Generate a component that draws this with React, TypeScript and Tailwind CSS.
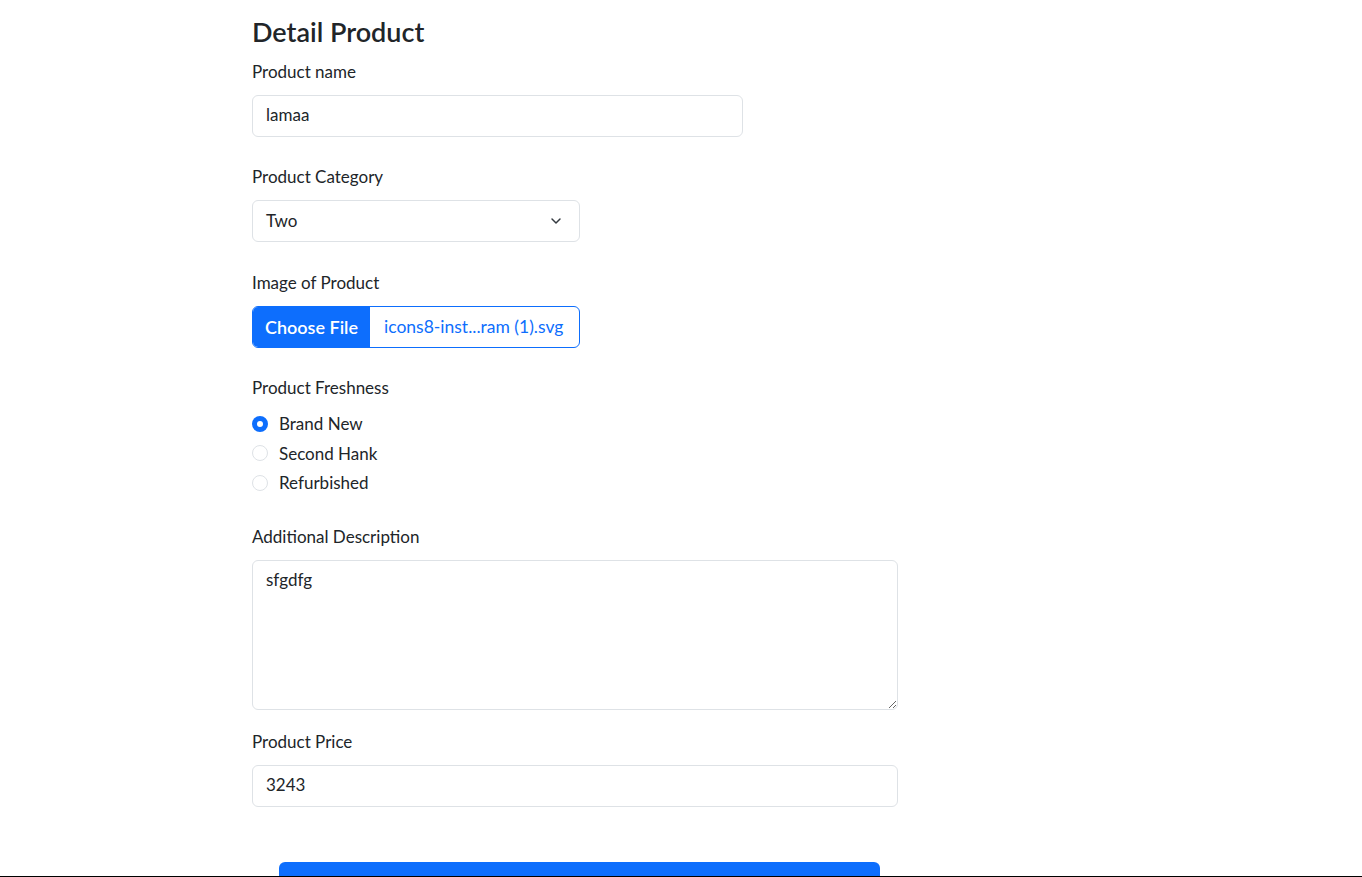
import { ChevronDown } from 'lucide-react';

const freshness = ['Brand New', 'Second Hank', 'Refurbished'];

function Label({ children }: { children: React.ReactNode }) {
  return <label className="block h-6 leading-6 mb-[11px] text-[17px]">{children}</label>;
}

export default function App() {
  return (
    <div
      className="h-[877px] overflow-hidden border-b border-black bg-white text-[#212529] text-base"
      style={{ fontFamily: 'Lato, "Noto Sans", sans-serif' }}
    >
      <form className="pl-[252px] pt-[15px]" onSubmit={(e) => e.preventDefault()}>
        <h3 className="text-[27px] leading-[34px] font-semibold mb-[11px]">Detail Product</h3>

        <Label>Product name</Label>
        <input
          defaultValue="lamaa"
          className="block w-[491px] h-[42px] px-[13px] pb-[3px] text-[17px] border border-[#dee2e6] rounded-md outline-none"
        />

        <div className="mt-[28px]">
          <Label>Product Category</Label>
          <div className="w-[328px] h-[42px] border border-[#dee2e6] rounded-md flex items-center px-[13px] text-[17px]">
            <span className="flex-1">Two</span>
            <ChevronDown className="w-4 h-4 text-[#343a40] mr-[2px]" strokeWidth={2.2} />
          </div>
        </div>

        <div className="mt-[29px]">
          <Label>Image of Product</Label>
          <div className="w-[328px] h-[42px] border border-[#0d6efd] rounded-md flex overflow-hidden">
            <span className="w-[117px] bg-[#0d6efd] text-white font-semibold flex items-center justify-center text-[18px]">
              Choose File
            </span>
            <span className="flex-1 flex items-center pl-[14px] text-[#0d6efd] text-[17.5px]">
              icons8-inst...ram (1).svg
            </span>
          </div>
        </div>

        <div className="mt-[28px]">
          <label className="block h-6 leading-6 mb-[9px] text-[17px]">Product Freshness</label>
          {freshness.map((f, i) => (
            <div key={f} className="flex items-center h-[29.5px] gap-[11px]">
              {i === 0 ? (
                <span className="w-4 h-4 rounded-full bg-[#0d6efd] flex items-center justify-center">
                  <span className="w-[6px] h-[6px] rounded-full bg-white" />
                </span>
              ) : (
                <span className="w-4 h-4 rounded-full border border-[#dee2e6]" />
              )}
              <span className="text-[17px]">{f}</span>
            </div>
          ))}
        </div>

        <div className="mt-[27px]">
          <Label>Additional Description</Label>
          <textarea
            defaultValue="sfgdfg"
            className="block w-[646px] h-[150px] px-[13px] py-[6px] text-[17px] border border-[#dee2e6] rounded-md outline-none"
          />
        </div>

        <div className="mt-[20px]">
          <Label>Product Price</Label>
          <input
            defaultValue="3243"
            className="block w-[646px] h-[42px] px-[13px] pb-[3px] text-[17px] border border-[#dee2e6] rounded-md outline-none"
          />
        </div>

        <button
          type="submit"
          className="block ml-[27px] mt-[55px] w-[601px] h-[42px] bg-[#0d6efd] text-white text-[17px] rounded-md"
        >
          Submit
        </button>
      </form>
    </div>
  );
}
